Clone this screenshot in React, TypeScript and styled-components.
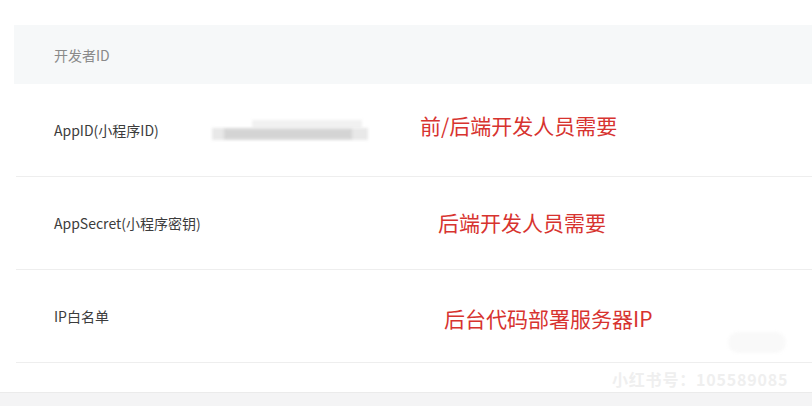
import styled, { createGlobalStyle } from 'styled-components';

const GlobalStyle = createGlobalStyle`
  html, body {
    margin: 0;
    padding: 0;
    background: #ffffff;
  }
  body {
    font-family: 'Noto Sans CJK SC', 'Liberation Sans', sans-serif;
    width: 812px;
    height: 406px;
    overflow: hidden;
  }
`;

const Page = styled.div`
  position: relative;
  width: 812px;
  height: 406px;
  display: flex;
  flex-direction: column;
  padding-top: 25px;
  box-sizing: border-box;
`;

const Table = styled.div`
  display: flex;
  flex-direction: column;
  margin-left: 14px;
`;

const HeadRow = styled.div`
  height: 59px;
  display: flex;
  align-items: center;
  padding-left: 40px;
  background: #f6f8f9;
  font-size: 14px;
  color: #8a8a8a;
`;

const Row = styled.div`
  height: 92px;
  display: flex;
  align-items: center;
  margin-left: 2px;
  border-bottom: 1px solid #eeeeee;
`;

const Label = styled.div`
  width: 158px;
  padding-left: 38px;
  font-size: 14px;
  color: #3c3c3c;
  flex-shrink: 0;
`;

const Value = styled.div`
  display: flex;
  align-items: center;
  flex: 1;
`;

const Blurred = styled.div`
  position: relative;
  width: 156px;
  height: 26px;
  flex-shrink: 0;
`;

const BlurBar = styled.div<{ $top: number; $left: number; $w: number; $h: number; $c: string }>`
  position: absolute;
  top: ${(p) => p.$top}px;
  left: ${(p) => p.$left}px;
  width: ${(p) => p.$w}px;
  height: ${(p) => p.$h}px;
  background: ${(p) => p.$c};
  filter: blur(1.5px);
`;

const Note = styled.div<{ $offset: number; $shift: number }>`
  margin-left: ${(p) => p.$offset}px;
  margin-top: ${(p) => p.$shift}px;
  font-size: 21px;
  color: #d7332f;
  white-space: nowrap;
`;

const Footer = styled.div`
  margin-top: 29px;
  flex: 1;
  background: #f4f4f5;
  border-top: 1px solid #ebebeb;
`;

const Watermark = styled.div`
  position: absolute;
  left: 612px;
  top: 367px;
  font-weight: 700;
  font-size: 16px;
  color: #efefef;
  letter-spacing: 0.8px;
  white-space: nowrap;
`;

const Pill = styled.div`
  position: absolute;
  left: 728px;
  top: 332px;
  width: 58px;
  height: 21px;
  border-radius: 11px;
  background: #f9f9f9;
  filter: blur(1.5px);
`;

const rows = [
  { label: 'AppID(小程序ID)', note: '前/后端开发人员需要', blurred: true, offset: 52, shift: -10 },
  { label: 'AppSecret(小程序密钥)', note: '后端开发人员需要', blurred: false, offset: 226, shift: -2 },
  { label: 'IP白名单', note: '后台代码部署服务器IP', blurred: false, offset: 232, shift: 4 },
];

export default function App() {
  return (
    <>
      <GlobalStyle />
      <Page>
        <Table>
          <HeadRow>开发者ID</HeadRow>
          {rows.map((r) => (
            <Row key={r.label}>
              <Label>{r.label}</Label>
              <Value>
                {r.blurred && (
                  <Blurred>
                    <BlurBar $top={3} $left={40} $w={110} $h={8} $c="#f1f1f1" />
                    <BlurBar $top={11} $left={0} $w={156} $h={12} $c="#e8e8e8" />
                    <BlurBar $top={12} $left={12} $w={128} $h={10} $c="#d4d4d4" />
                  </Blurred>
                )}
                <Note $offset={r.offset} $shift={r.shift}>{r.note}</Note>
              </Value>
            </Row>
          ))}
        </Table>
        <Footer />
        <Pill />
        <Watermark>小红书号：105589085</Watermark>
      </Page>
    </>
  );
}
